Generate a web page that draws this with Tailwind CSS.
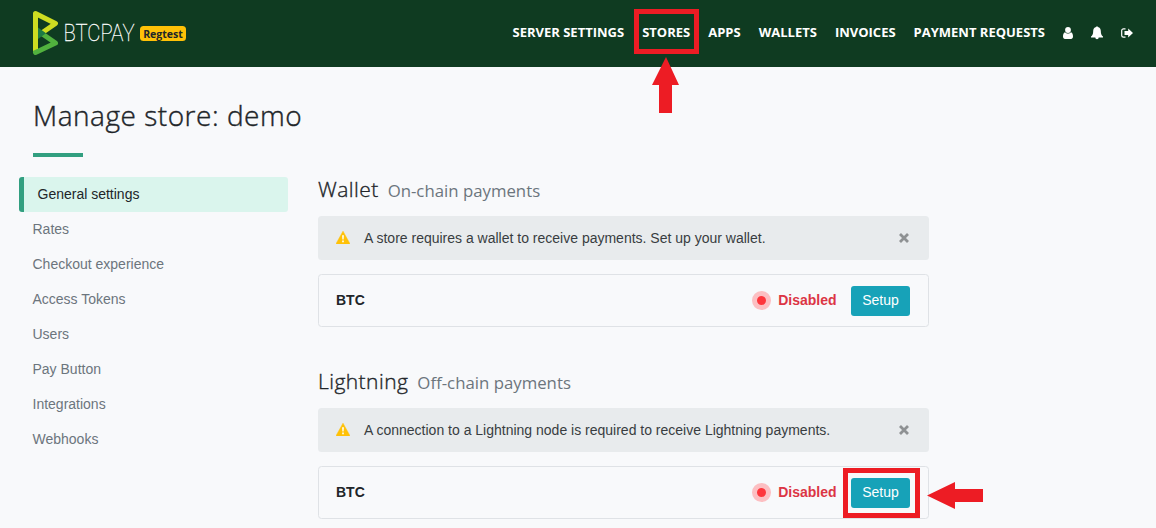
<!DOCTYPE html>
<html lang="en">
<head>
<meta charset="utf-8">
<title>Manage store: demo</title>
<script src="https://cdn.jsdelivr.net/npm/@tailwindcss/browser@4"></script>
</head>
<body class="relative h-[528px] w-[1156px] overflow-hidden bg-[#f8f9fb] font-['Liberation_Sans',Arial,sans-serif] text-[14px] leading-[21px] text-[#212529]">
<header class="flex h-[67px] items-center bg-[#0f3b21] pb-px pl-[32px] pr-[23px] font-['Open_Sans',sans-serif]">
  <a class="flex items-center pt-px">
    <svg class="h-[47px] w-[32px]" viewBox="0 0 32 47" fill="none">
      <g stroke-linejoin="round" stroke-linecap="round" stroke-width="5">
        <path d="M3.500 40V3.500L23.500 13.500L9 23.500" stroke="#cedc21"/>
        <path d="M3.500 42.500L23.500 33L9 23" stroke="#51b13e"/>
        <path d="M3.500 39V8" stroke="#cedc21" stroke-linecap="butt"/>
      </g>
      <path d="M6 17.500L14 23.300L6 29Z" fill="#1e7a44"/>
    </svg>
    <svg class="h-[47px] w-[76px]" viewBox="0 0 76 47">
      <text x="-.5" y="31.300" font-family="Roboto" font-weight="100" font-size="23.500" fill="#fff" stroke="#fff" stroke-width=".3" textLength="71" lengthAdjust="spacingAndGlyphs">BTCPAY</text>
    </svg>
    <span class="flex h-[15px] w-[46px] items-center justify-center rounded-[3.5px] bg-[#ffc107] pt-px text-[10.5px] leading-none font-bold">Regtest</span>
  </a>
  <nav class="ml-auto flex items-center gap-[18px] text-[13px] font-bold whitespace-nowrap text-white">
    <a class="pb-[2px]">SERVER SETTINGS</a>
    <a class="pb-[2px]">STORES</a>
    <a class="pb-[2px]">APPS</a>
    <a class="pb-[2px]">WALLETS</a>
    <a class="pb-[2px]">INVOICES</a>
    <a class="pb-[2px]">PAYMENT REQUESTS</a>
    <svg class="mb-px h-[12px] w-[10px]" viewBox="0 0 10 12" fill="#fff"><circle cx="5" cy="3" r="2.900"/><path d="M2 5.200C.7 5.600 0 7.300 0 9.500C0 11 .8 12 2 12H8C9.200 12 10 11 10 9.500C10 7.300 9.300 5.600 8 5.200C6.500 7 3.500 7 2 5.200Z"/></svg>
    <svg class="mb-px h-[14px] w-[12px]" viewBox="0 0 12 14" fill="#fff"><path d="M5.200 1A.8.8 0 0 1 6.800 1C9 1.500 9.800 3.200 9.800 5C9.800 8 10.600 9.600 12 10.500V11.500H7.700A1.700 1.700 0 0 1 4.300 11.500H0V10.500C1.400 9.600 2.200 8 2.200 5C2.200 3.200 3 1.500 5.200 1Z"/></svg>
    <svg class="mb-px h-[10px] w-[12px]" viewBox="0 0 12 10"><path d="M4.500 .9H2.500C1.500 .9 .7 1.600 .7 2.600V7.400C.7 8.400 1.500 9.100 2.500 9.100H4.500" fill="none" stroke="#fff" stroke-width="1.200"/><path d="M7.200 .4L12 5L7.200 9.600V7H3.500V3H7.200Z" fill="#fff"/></svg>
  </nav>
</header>

<main class="flex flex-col">
  <div class="pl-[33px] pt-[27px]">
    <h1 class="h-[42px] font-['Open_Sans',sans-serif] text-[28px] leading-[42px] font-light tracking-[0.52px] whitespace-nowrap [-webkit-text-stroke:0.4px_#212529]">Manage store: demo</h1>
    <hr class="mt-[17px] h-[4px] w-[50px] border-0 bg-[#329f80]">
  </div>
  <div class="flex gap-[30px] pl-[19px] pt-[20px]">
    <nav class="flex w-[269px] flex-col text-[#6c757d]">
      <a class="flex h-[35px] items-center rounded-[3px] border-l-[5px] border-[#329f80] bg-[#daf5ed] pl-[13.5px] text-[#212529]">General settings</a>
      <a class="flex h-[35px] items-center pl-[13.5px]">Rates</a>
      <a class="flex h-[35px] items-center pl-[13.5px]">Checkout experience</a>
      <a class="flex h-[35px] items-center pl-[13.5px]">Access Tokens</a>
      <a class="flex h-[35px] items-center pl-[13.5px]">Users</a>
      <a class="flex h-[35px] items-center pl-[13.5px]">Pay Button</a>
      <a class="flex h-[35px] items-center pl-[13.5px]">Integrations</a>
      <a class="flex h-[35px] items-center pl-[13.5px]">Webhooks</a>
    </nav>
    <div class="flex w-[611px] flex-col">
      <section class="h-[192px]">
        <h2 class="flex h-[39px] items-baseline gap-[9px] font-['Open_Sans',sans-serif] text-[21px] leading-[25px] font-light tracking-[0.45px] whitespace-nowrap [-webkit-text-stroke:0.35px_#212529]">Wallet <small class="text-[16.800px] font-normal tracking-normal text-[#6c757d] [-webkit-text-stroke:0]">On-chain payments</small></h2>
        <div class="flex h-[44px] items-center rounded-[3.500px] bg-[#e8ebed] pl-[18px] pr-[20px] text-[#383d41]">
          <svg class="mb-[2px] h-[13px] w-[14px]" viewBox="0 0 14 13"><path d="M7 .2L13.800 12.400Q13.900 13 13.300 13H.7Q.1 13 .2 12.400Z" fill="#ffc107" stroke="#ffc107" stroke-width=".5"/><path d="M6.100 4.300H7.900L7.600 8.500H6.400ZM6.200 9.500H7.800V11.200H6.200Z" fill="#fff"/></svg>
          <span class="ml-[14px] whitespace-nowrap">A store requires a wallet to receive payments. Set up your wallet.</span>
          <svg class="ml-auto h-[10px] w-[10px]" viewBox="0 0 10 10"><path d="M1 1L9 9M9 1L1 9" stroke="#8e9193" stroke-width="2.800"/></svg>
        </div>
        <div class="mt-[14px] flex h-[53px] items-center rounded-[3.500px] border border-[#dfe2e6] pl-[17px] pr-[18px]">
          <b>BTC</b>
          <span class="ml-auto mr-[7px] h-[19px] w-[19px] rounded-full border-5 border-[#fcbfc2] bg-[#fd363c]"></span>
          <b class="mr-[14.5px] text-[#dc3545]">Disabled</b>
          <button class="h-[30px] w-[59px] rounded-[3px] bg-[#17a2b8] text-white">Setup</button>
        </div>
      </section>
      <section>
        <h2 class="flex h-[39px] items-baseline gap-[9px] font-['Open_Sans',sans-serif] text-[21px] leading-[25px] font-light tracking-[0.45px] whitespace-nowrap [-webkit-text-stroke:0.35px_#212529]">Lightning <small class="text-[16.800px] font-normal tracking-normal text-[#6c757d] [-webkit-text-stroke:0]">Off-chain payments</small></h2>
        <div class="flex h-[44px] items-center rounded-[3.500px] bg-[#e8ebed] pl-[18px] pr-[20px] text-[#383d41]">
          <svg class="mb-[2px] h-[13px] w-[14px]" viewBox="0 0 14 13"><path d="M7 .2L13.800 12.400Q13.900 13 13.300 13H.7Q.1 13 .2 12.400Z" fill="#ffc107" stroke="#ffc107" stroke-width=".5"/><path d="M6.100 4.300H7.900L7.600 8.500H6.400ZM6.200 9.500H7.800V11.200H6.200Z" fill="#fff"/></svg>
          <span class="ml-[14px] whitespace-nowrap">A connection to a Lightning node is required to receive Lightning payments.</span>
          <svg class="ml-auto h-[10px] w-[10px]" viewBox="0 0 10 10"><path d="M1 1L9 9M9 1L1 9" stroke="#8e9193" stroke-width="2.800"/></svg>
        </div>
        <div class="mt-[14px] flex h-[53px] items-center rounded-[3.500px] border border-[#dfe2e6] pl-[17px] pr-[18px]">
          <b>BTC</b>
          <span class="ml-auto mr-[7px] h-[19px] w-[19px] rounded-full border-5 border-[#fcbfc2] bg-[#fd363c]"></span>
          <b class="mr-[14.5px] text-[#dc3545]">Disabled</b>
          <button class="h-[30px] w-[59px] rounded-[3px] bg-[#17a2b8] text-white">Setup</button>
        </div>
      </section>
    </div>
  </div>
</main>

<!-- Callouts over the page -->
<div class="absolute left-[634px] top-[9px] h-[45px] w-[65px] border-5 border-[#ed1c24]"></div>
<svg class="absolute left-[652px] top-[57px] h-[56px] w-[27px]" viewBox="0 0 27 56"><path d="M14 0L27 28H20V56H7V28H0Z" fill="#ed1c24"/></svg>
<div class="absolute left-[843px] top-[468px] h-[50px] w-[77px] border-5 border-[#ed1c24]"></div>
<svg class="absolute left-[927px] top-[482px] h-[27px] w-[56px]" viewBox="0 0 56 27"><path d="M0 13.500L28 0V7H56V20H28V27Z" fill="#ed1c24"/></svg>
</body>
</html>
